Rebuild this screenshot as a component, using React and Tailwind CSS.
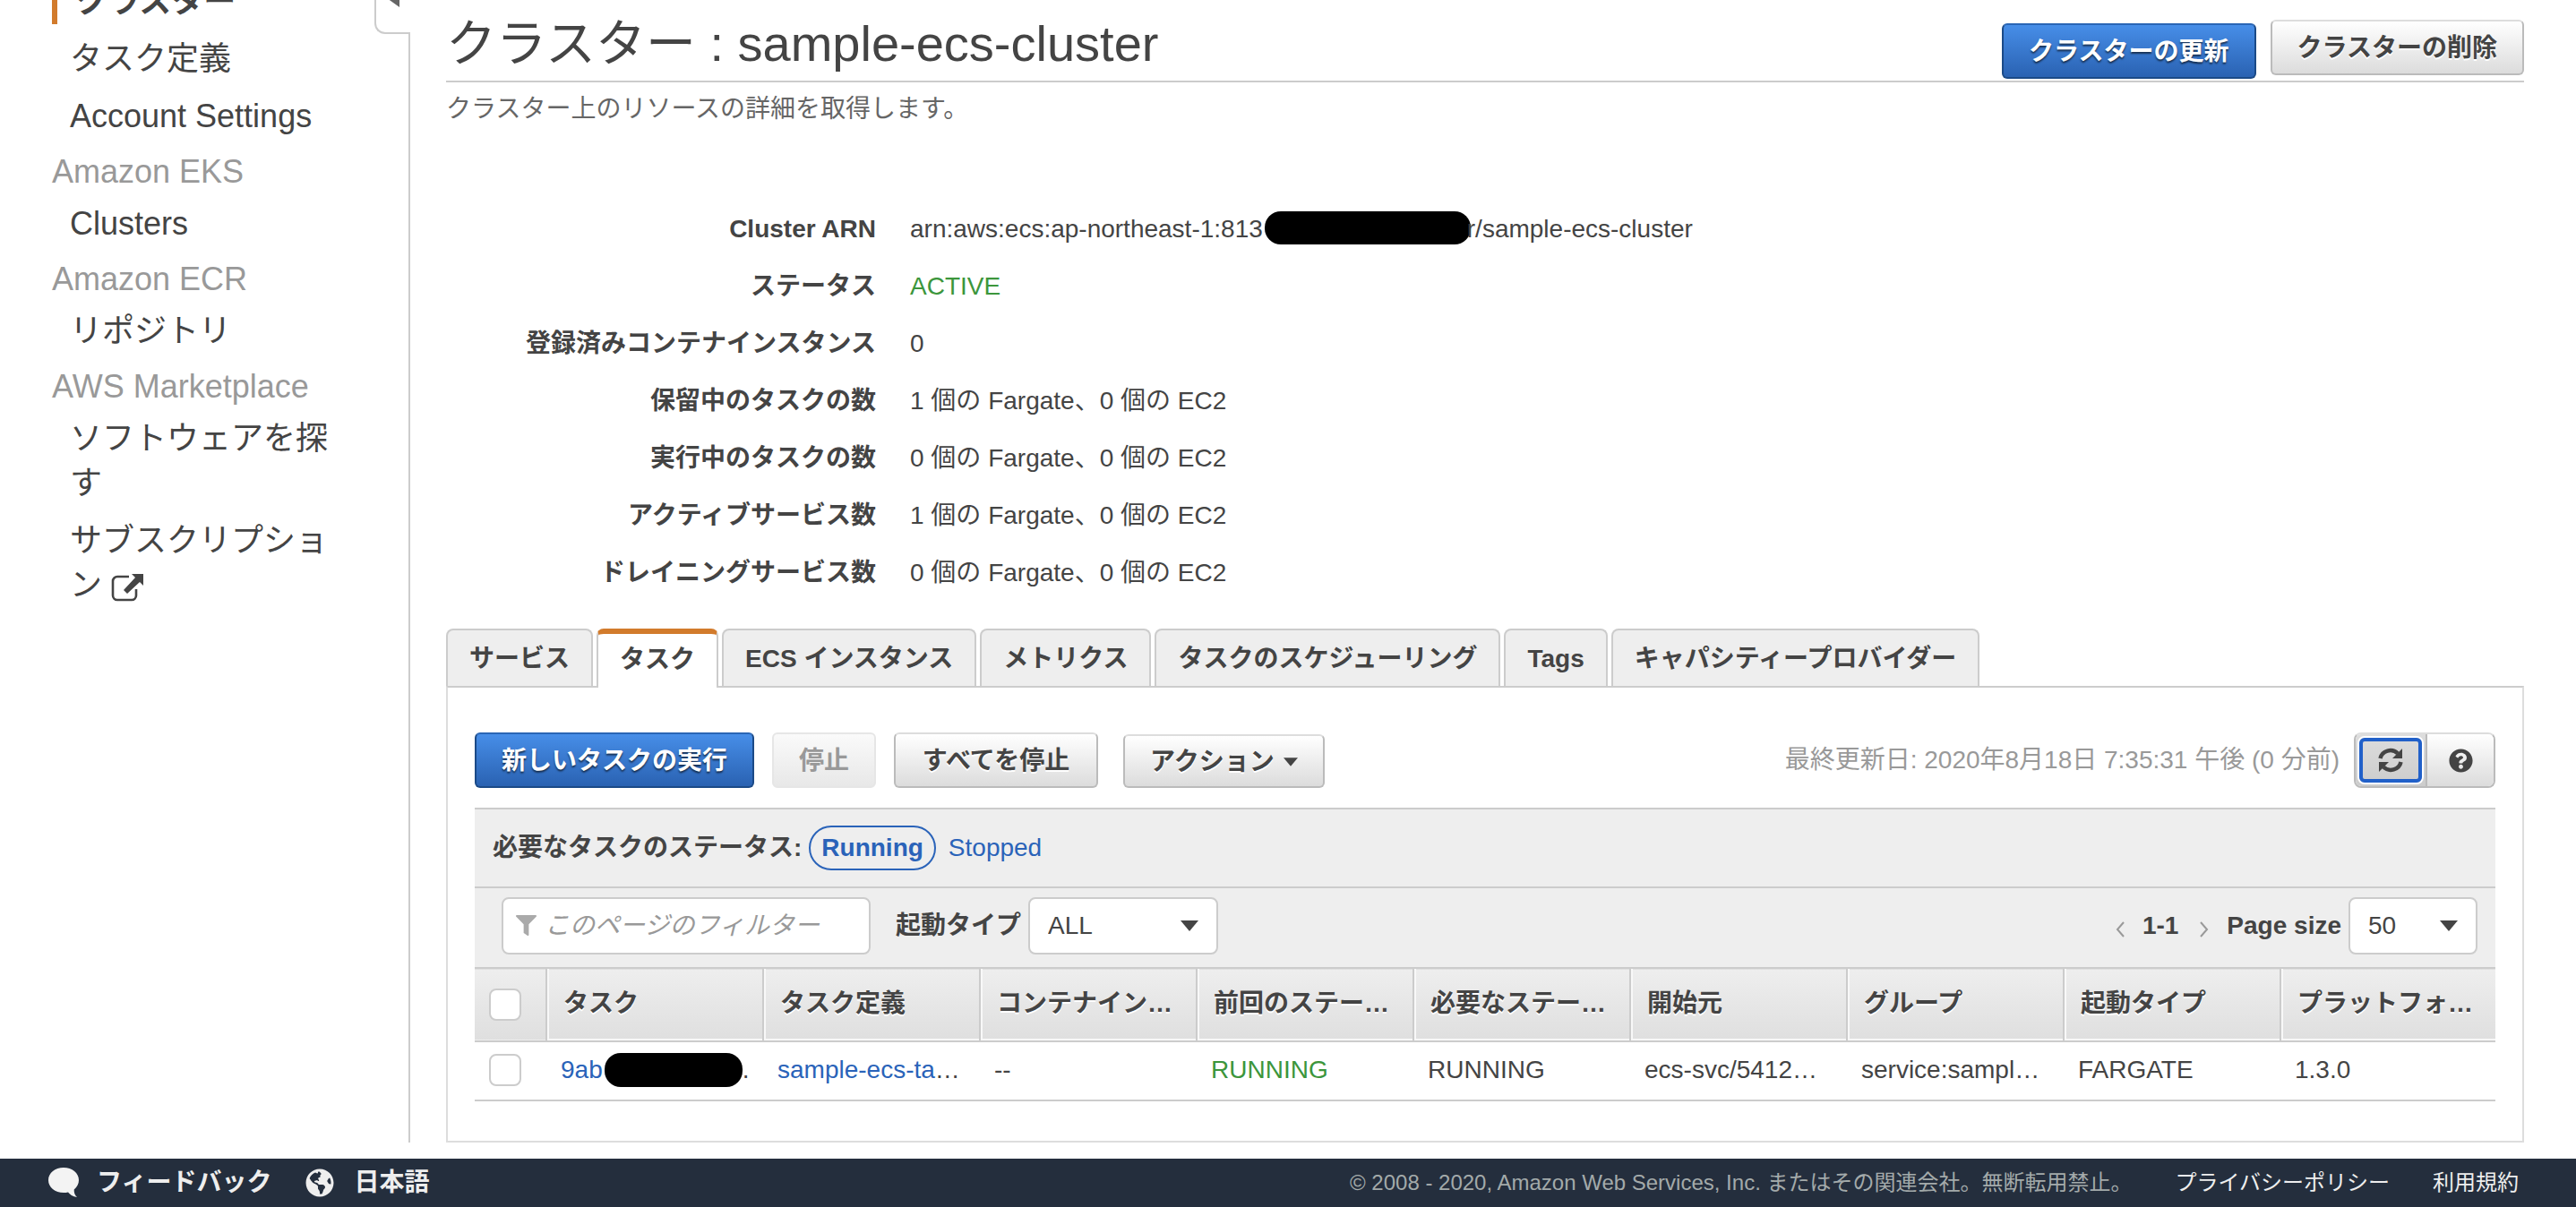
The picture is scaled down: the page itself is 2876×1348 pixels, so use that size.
import { FaFilter, FaGlobeAmericas, FaQuestionCircle } from "react-icons/fa";

const NAV = [
  {
    items: [{ label: "クラスター", active: true }, { label: "タスク定義" }, { label: "Account Settings" }],
  },
  { title: "Amazon EKS", items: [{ label: "Clusters" }] },
  { title: "Amazon ECR", items: [{ label: "リポジトリ" }] },
  {
    title: "AWS Marketplace",
    items: [{ label: "ソフトウェアを探す" }, { label: "サブスクリプション", external: true }],
  },
];

const DETAILS = [
  ["登録済みコンテナインスタンス", "0"],
  ["保留中のタスクの数", "1 個の Fargate、0 個の EC2"],
  ["実行中のタスクの数", "0 個の Fargate、0 個の EC2"],
  ["アクティブサービス数", "1 個の Fargate、0 個の EC2"],
  ["ドレイニングサービス数", "0 個の Fargate、0 個の EC2"],
];

const TABS = [
  "サービス",
  "タスク",
  "ECS インスタンス",
  "メトリクス",
  "タスクのスケジューリング",
  "Tags",
  "キャパシティープロバイダー",
];

const COLUMNS = [
  "タスク",
  "タスク定義",
  "コンテナイン…",
  "前回のステー…",
  "必要なステー…",
  "開始元",
  "グループ",
  "起動タイプ",
  "プラットフォ…",
];

const BUTTON_BASE =
  "flex items-center justify-center rounded-md border-2 px-7 pt-0.5 font-bold leading-[56px]";
const BUTTON_STYLES = {
  primary:
    "border-[#1b4a87] border-t-[#2a66b5] bg-linear-to-b from-[#478ee8] to-[#2a62b2] text-white [text-shadow:0_2px_2px_rgba(0,0,0,0.6)]",
  normal:
    "border-[#bbb] border-t-[#ddd] bg-linear-to-b from-white to-[#dcdcdc] text-[#444] [text-shadow:0_2px_0_#fff]",
  disabled: "border-[#e6e6e6] bg-linear-to-b from-[#fafafa] to-[#e8e8e8] text-[#999]",
};

function Button({ kind = "normal", className = "", children, ...rest }) {
  return (
    <button type="button" className={`${BUTTON_BASE} ${BUTTON_STYLES[kind]} ${className}`} {...rest}>
      {children}
    </button>
  );
}

function ExternalIcon() {
  return (
    <svg viewBox="0 0 36 32" className="inline-block h-8 w-9" aria-hidden="true">
      <path
        d="M20 4H7a5 5 0 0 0-5 5v16a5 5 0 0 0 5 5h16a5 5 0 0 0 5-5v-7"
        fill="none"
        stroke="currentColor"
        strokeWidth="2.6"
      />
      <path d="M23 1h13v13l-4-4-14 13-4-4L27 5z" fill="currentColor" />
    </svg>
  );
}

function Caret({ className }) {
  return (
    <svg viewBox="0 0 20 12" className={className} aria-hidden="true">
      <path d="M0 0h20L10 12z" fill="#444" />
    </svg>
  );
}

function RefreshIcon() {
  return (
    <svg viewBox="0 0 28 28" className="size-7" aria-hidden="true">
      <g fill="none" stroke="#444" strokeWidth="4.5">
        <path d="M2.500 12A11.500 11 0 0 1 22 6.500" />
        <path d="M25.500 16A11.500 11 0 0 1 6 21.500" />
      </g>
      <path d="M27 1v11H16z" fill="#444" />
      <path d="M1 27V16h11z" fill="#444" />
    </svg>
  );
}

function Select({ id, options, className }) {
  return (
    <div className={`relative ${className}`}>
      <select
        id={id}
        className="h-16 w-full appearance-none rounded-lg border-2 border-[#ccc] bg-white pl-5 text-[#444]"
      >
        {options.map((o) => (
          <option key={o}>{o}</option>
        ))}
      </select>
      <Caret className="pointer-events-none absolute top-[26px] right-[22px] h-3 w-5" />
    </div>
  );
}

function Checkbox({ label }) {
  return (
    <input
      type="checkbox"
      aria-label={label}
      className="block size-9 appearance-none rounded-lg border-2 border-[#ccc] bg-white"
    />
  );
}

function Sidebar() {
  return (
    <nav className="-mt-[23px] w-[418px] shrink-0 pl-[58px] text-4xl leading-[50px]">
      {NAV.map(({ title, items }) => (
        <section key={items[0].label} className="mb-3">
          {title && <h2 className="mb-2 text-[#999]">{title}</h2>}
          <ul className="flex flex-col gap-3.5">
            {items.map(({ label, active, external }) => (
              <li
                key={label}
                className={active ? "border-l-6 border-[#d27b2c] pl-5 font-bold" : "w-[320px] pl-5"}
              >
                <a href="#">
                  {label}
                  {external && (
                    <>
                      {" "}
                      <ExternalIcon />
                    </>
                  )}
                </a>
              </li>
            ))}
          </ul>
        </section>
      ))}
    </nav>
  );
}

function SidebarEdge() {
  return (
    <div className="flex w-10 shrink-0 flex-col">
      <button
        type="button"
        aria-label="Collapse"
        className="-mt-10 flex h-[78px] items-center rounded-bl-xl border-b-2 border-l-2 border-[#ccc] pl-3"
      >
        <svg viewBox="0 0 14 20" className="h-5 w-3.5" aria-hidden="true">
          <path d="M14 0v20L0 10z" fill="#666" />
        </svg>
      </button>
      <div className="flex-1 border-r-2 border-[#ccc]" />
    </div>
  );
}

function ClusterDetails() {
  return (
    <dl className="mt-[82px] grid auto-rows-[64px] grid-cols-[480px_1fr] items-center gap-x-[38px]">
      <dt className="text-right font-bold">Cluster ARN</dt>
      <dd className="flex items-center">
        arn:aws:ecs:ap-northeast-1:813
        <span className="-mt-1 -mr-1 ml-0.5 h-[37px] w-[230px] rounded-[18px] bg-black" />
        r/sample-ecs-cluster
      </dd>
      <dt className="text-right font-bold">ステータス</dt>
      <dd className="text-[#3c963c]">ACTIVE</dd>
      {DETAILS.map(([label, value]) => (
        <div key={label} className="contents">
          <dt className="text-right font-bold">{label}</dt>
          <dd>{value}</dd>
        </div>
      ))}
    </dl>
  );
}

function Toolbar() {
  return (
    <div className="flex items-end">
      <Button kind="primary">新しいタスクの実行</Button>
      <Button kind="disabled" className="ml-5" disabled>
        停止
      </Button>
      <Button className="ml-5 min-w-[228px]">すべてを停止</Button>
      <Button className="ml-7 h-[60px]">
        アクション
        <Caret className="ml-2.5 h-3 w-4" />
      </Button>
      <p className="ml-auto leading-[62px] text-[#999]">最終更新日: 2020年8月18日 7:35:31 午後 (0 分前)</p>
      <div className="ml-4 flex h-[62px] w-[158px] rounded-lg border-2 border-[#bbb] border-t-[#ddd]">
        <button
          type="button"
          aria-label="更新"
          className="flex flex-1 rounded-l-md border-r-2 border-[#bbb] bg-linear-to-b from-[#ddd] to-[#ccc] p-0.5"
        >
          <span className="flex flex-1 items-center justify-center rounded-lg border-2 border-white">
            <span className="flex h-full w-full items-center justify-center rounded-md border-4 border-[#2160c9]">
              <RefreshIcon />
            </span>
          </span>
        </button>
        <button
          type="button"
          aria-label="ヘルプ"
          className="flex flex-1 items-center justify-center rounded-r-md bg-linear-to-b from-white to-[#dcdcdc]"
        >
          <FaQuestionCircle className="size-[27px] text-[#444]" />
        </button>
      </div>
    </div>
  );
}

function Filters() {
  return (
    <div className="bg-[#eee]">
      <div className="flex h-[88px] items-center border-t-2 border-[#ccc] pl-5">
        <span className="font-bold">必要なタスクのステータス:</span>
        <a
          href="#"
          className="mr-3.5 ml-2 rounded-full border-2 border-[#2a63b9] px-3 leading-[46px] font-bold text-[#2a63b9]"
        >
          Running
        </a>
        <a href="#" className="text-[#2a63b9]">
          Stopped
        </a>
      </div>
      <div className="flex h-[90px] items-center border-t-2 border-[#ccc] pr-5 pb-1 pl-[30px]">
        <div className="relative">
          <FaFilter className="absolute top-5 left-4 size-[23px] text-[#aaa]" />
          <input
            type="text"
            aria-label="フィルター"
            placeholder="このページのフィルター"
            className="h-16 w-[412px] rounded-lg border-2 border-[#ccc] bg-white pl-[46px] placeholder:text-[#999] placeholder:italic"
          />
        </div>
        <label htmlFor="launch-type" className="mr-2 ml-7 font-bold">
          起動タイプ
        </label>
        <Select id="launch-type" options={["ALL", "FARGATE", "EC2"]} className="w-[212px]" />
        <div className="ml-auto flex items-center font-bold">
          <button type="button" className="text-[#999]" aria-label="Previous">
            <svg viewBox="0 0 10 18" className="mt-2 h-[18px] w-2.5" aria-hidden="true">
              <path d="M9 1L2 9l7 8" fill="none" stroke="currentColor" strokeWidth="2" />
            </svg>
          </button>
          <span className="mr-6 ml-5">1-1</span>
          <button type="button" className="text-[#999]" aria-label="Next">
            <svg viewBox="0 0 10 18" className="mt-2 h-[18px] w-2.5" aria-hidden="true">
              <path d="M1 1l7 8-7 8" fill="none" stroke="currentColor" strokeWidth="2" />
            </svg>
          </button>
          <label htmlFor="page-size" className="mr-2 ml-5">
            Page size
          </label>
          <Select id="page-size" options={["50", "100"]} className="w-36 font-normal" />
        </div>
      </div>
    </div>
  );
}

function TaskTable() {
  return (
    <table className="w-full table-fixed border-collapse text-left whitespace-nowrap">
      <thead>
        <tr className="h-[82px] border-y-2 border-[#ccc] bg-linear-to-b from-[#eee] to-[#dfdfdf]">
          <th className="w-20 border-r-2 border-[#ccc] pl-4">
            <Checkbox label="すべて選択" />
          </th>
          {COLUMNS.map((c) => (
            <th
              key={c}
              className="w-[242px] border-r-2 border-[#ccc] pb-0.5 pl-[18px] shadow-[inset_2px_-2px_0_#f8f8f8] [text-shadow:0_2px_0_#fff] last:w-auto last:border-r-0"
            >
              {c}
            </th>
          ))}
        </tr>
      </thead>
      <tbody>
        <tr className="h-[66px] border-b-2 border-[#ccc] [&>td]:pb-0.5 [&>td]:pl-4">
          <td>
            <Checkbox label="タスクを選択" />
          </td>
          <td>
            <span className="flex items-center">
              <a href="#" className="text-[#2a63b9]">
                9ab
              </a>
              <span className="ml-0.5 h-[38px] w-[154px] rounded-[18px] bg-black" />.
            </span>
          </td>
          <td>
            <a href="#" className="text-[#2a63b9]">
              sample-ecs-ta
            </a>
            …
          </td>
          <td>--</td>
          <td className="text-[#3c963c]">RUNNING</td>
          <td>RUNNING</td>
          <td>ecs-svc/5412…</td>
          <td>service:sampl…</td>
          <td>FARGATE</td>
          <td>1.3.0</td>
        </tr>
      </tbody>
    </table>
  );
}

function Footer() {
  return (
    <footer className="flex h-[54px] items-center bg-[#242e3d] pr-16 pl-[54px] text-2xl text-[#eee]">
      <a href="#" className="flex items-center gap-5 text-[28px] font-bold">
        <svg viewBox="0 0 34 33" className="h-[33px] w-[34px]" aria-hidden="true">
          <path
            d="M17 0C7.500 0 0 6 0 14s7.500 14 17 14c1.800 0 3.500-.2 5-.6 2 2.600 5 4.600 10 5.600-2.500-2.500-3.500-5-3.300-8.600C32 21.800 34 18 34 14 34 6 26.500 0 17 0z"
            fill="#f3f3f3"
          />
        </svg>
        フィードバック
      </a>
      <a href="#" className="ml-[38px] flex items-center gap-[22px] text-[28px] font-bold">
        <FaGlobeAmericas className="size-8" />
        日本語
      </a>
      <span className="ml-auto text-[#a3aaaa]">
        © 2008 - 2020, Amazon Web Services, Inc. またはその関連会社。無断転用禁止。
      </span>
      <a href="#" className="ml-12">
        プライバシーポリシー
      </a>
      <a href="#" className="ml-12">
        利用規約
      </a>
    </footer>
  );
}

export default function App() {
  return (
    <div className="flex min-h-screen flex-col overflow-hidden bg-white font-['Liberation_Sans','Noto_Sans_CJK_JP',sans-serif] text-[28px] leading-10 text-[#444]">
      <div className="flex flex-1 pb-[18px]">
        <Sidebar />
        <SidebarEdge />
        <main className="min-w-0 flex-1 pr-[58px] pl-10">
          <header className="flex items-start justify-between border-b-2 border-[#ccc]">
            <h1 className="pt-5 pb-3 text-[56px] leading-[58px]">クラスター : sample-ecs-cluster</h1>
            <div className="flex items-start gap-4 pt-[22px]">
              <Button kind="primary" className="mt-1">
                クラスターの更新
              </Button>
              <Button>クラスターの削除</Button>
            </div>
          </header>
          <p className="mt-2.5 text-[#666]">クラスター上のリソースの詳細を取得します。</p>

          <ClusterDetails />

          <div role="tablist" className="mt-[30px] flex items-start gap-1">
            {TABS.map((tab) => {
              const selected = tab === "タスク";
              return (
                <button
                  key={tab}
                  type="button"
                  role="tab"
                  aria-selected={selected}
                  className={
                    selected
                      ? "relative -mb-0.5 h-[66px] rounded-t-lg border-x-2 border-t-6 border-[#ccc] border-t-[#d27b2c] bg-white px-6 pb-0.5 font-bold"
                      : "h-16 rounded-t-lg border-2 border-b-0 border-[#ccc] bg-[#eee] px-6 pt-0.5 font-bold"
                  }
                >
                  {tab}
                </button>
              );
            })}
          </div>
          <div className="border-2 border-[#ddd] border-t-[#ccc] px-[30px] pt-[50px] pb-11">
            <Toolbar />
            <div className="mt-[22px]">
              <Filters />
              <TaskTable />
            </div>
          </div>
        </main>
      </div>
      <Footer />
    </div>
  );
}
